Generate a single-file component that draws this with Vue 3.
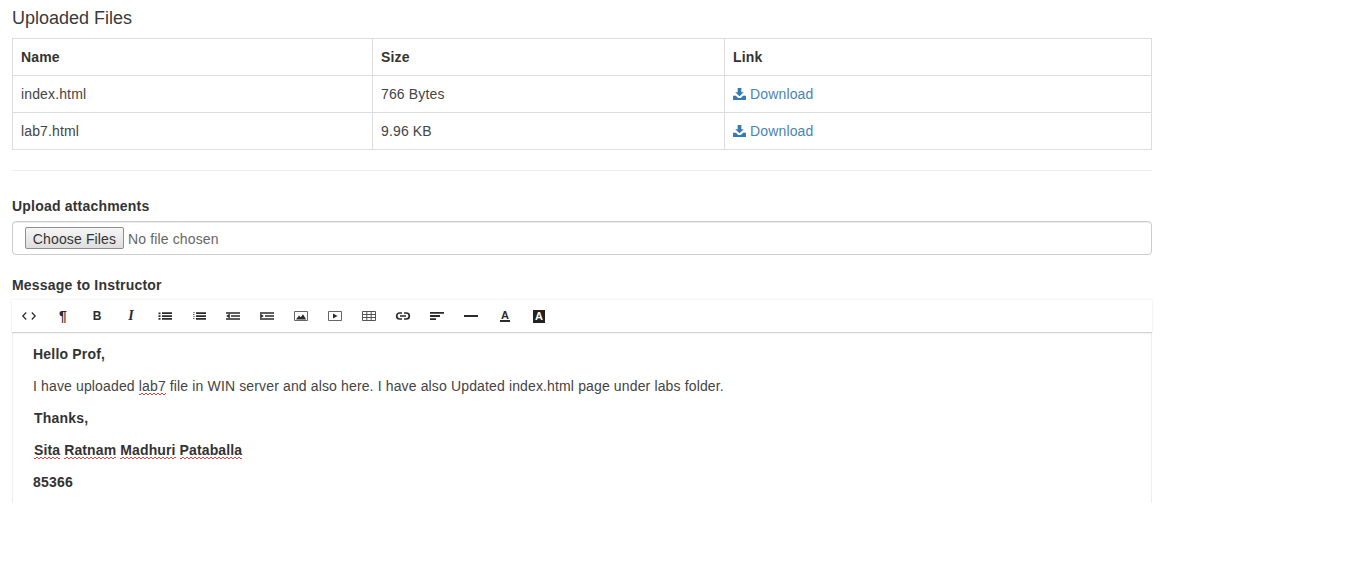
<script setup>
const files = [
  { name: "index.html", size: "766 Bytes" },
  { name: "lab7.html", size: "9.96 KB" },
];

const tools = [
  { id: "code", stroke: "M5.2 4.5L1.8 8L5.2 11.5M10.8 4.5L14.2 8L10.8 11.5", sw: 1.2 },
  { id: "para", text: "¶" },
  { id: "bold", text: "B" },
  { id: "italic", text: "I" },
  { id: "ul", fill: "M1.5 4.5h2v1.8h-2zM1.5 7.2h2V9h-2zM1.5 10h2v1.8h-2zM5 4.3h10V6H5zM5 7.2h10V9H5zM5 10h10v1.8H5z" },
  { id: "ol", fill: "M2.5 4h1v1h-1zM2 6h1.5v.8H2zM2.5 8h1v1h-1zM2 10.2h1.5v.8H2zM5 4.3h10V6H5zM5 7.2h10V9H5zM5 10h10v1.8H5z" },
  { id: "outdent", fill: "M1 4.2h14v1.5H1zM6 7.2h9v1.6H6zM1 10.3h14v1.5H1zM4.8 5.6v4.8L1.2 8z" },
  { id: "indent", fill: "M1 4.2h14v1.5H1zM6 7.2h9v1.6H6zM1 10.3h14v1.5H1zM1.2 5.6v4.8L4.8 8z" },
  { id: "picture", stroke: "M1.5 3.5h13v9h-13z", sw: 1, tone: "#666", fill: "M3 11.5l3-4 1.8 1.8 2.2-3 3.2 5.2z" },
  { id: "video", stroke: "M1.5 3.5h13v9h-13z", sw: 1, tone: "#666", fill: "M6 5.5l4.5 2.5L6 10.5z" },
  { id: "table", stroke: "M1.5 3.5h13v9h-13zM1.5 6.5h13M1.5 9.5h13M5.8 3.5v9M10.2 3.5v9", sw: 1, tone: "#555" },
  { id: "link", stroke: "M7 5H4.7a3 3 0 0 0 0 6H7M9 5h2.3a3 3 0 0 1 0 6H9M5 8h6", sw: 1.7 },
  { id: "align", fill: "M1 4h14v1.8H1zM1 7.1h10v1.8H1zM1 10.2h6v1.8H1z" },
  { id: "rule", fill: "M1 7h14v2H1z" },
  { id: "color", text: "A" },
  { id: "back", text: "A" },
];
</script>

<template>
  <div class="page">
    <h4 class="title">Uploaded Files</h4>
    <table class="files">
      <thead>
        <tr>
          <th class="col-name">Name</th>
          <th class="col-size">Size</th>
          <th>Link</th>
        </tr>
      </thead>
      <tbody>
        <tr v-for="file in files" :key="file.name">
          <td>{{ file.name }}</td>
          <td>{{ file.size }}</td>
          <td>
            <a class="dl" href="#">
              <svg width="13" height="12" viewBox="0 0 14 13">
                <path fill="#337ab7" d="M5 0h4v4.5h2.6L7 9 2.4 4.5H5zM0 8.5h3.2L5.5 10.7h3L10.8 8.5H14V13H0z" />
              </svg>
              Download
            </a>
          </td>
        </tr>
      </tbody>
    </table>

    <hr class="sep" />

    <div class="group">
      <label class="lbl">Upload attachments</label>
      <div class="file-input">
        <button class="choose" type="button">Choose Files</button>
        <span class="none">No file chosen</span>
      </div>
    </div>

    <div class="group">
      <label class="lbl">Message to Instructor</label>
      <div class="toolbar">
        <span v-for="t in tools" :key="t.id" class="tool">
          <span v-if="t.text" :class="['glyph', t.id]">{{ t.text }}</span>
          <svg v-else width="16" height="16" viewBox="0 0 16 16">
            <path v-if="t.stroke" :d="t.stroke" fill="none" :stroke="t.tone || '#2b2b2b'" :stroke-width="t.sw" />
            <path v-if="t.fill" :d="t.fill" fill="#2b2b2b" />
          </svg>
        </span>
      </div>
      <div class="editor">
        <p class="strong">Hello Prof,</p>
        <p>I have uploaded <span class="typo">lab7</span> file in WIN server and also here. I have also Updated index.html page under labs folder.</p>
        <p class="strong nudge">Thanks,</p>
        <p class="strong nudge names"><span class="typo">Sita</span> <span class="typo">Ratnam</span> <span class="typo">Madhuri</span> <span class="typo">Pataballa</span></p>
        <p class="strong">85366</p>
      </div>
    </div>
  </div>
</template>

<style>
body {
  background: #fff;
}
</style>

<style scoped>
.page {
  width: 1140px;
  margin-left: 12px;
  padding-top: 8px;
  font-family: "Liberation Sans", Arial, sans-serif;
  font-size: 14px;
  line-height: 20px;
  letter-spacing: 0.14px;
  color: #444;
}

.title {
  margin: 0 0 10px;
  color: #3a3a3a;
  font-size: 18px;
  font-weight: 400;
  line-height: 20px;
  letter-spacing: 0;
}

.files {
  width: 1140px;
  border-collapse: collapse;
  table-layout: fixed;
}

.files th,
.files td {
  box-sizing: border-box;
  padding: 8px;
  border: 1px solid #ddd;
  text-align: left;
}

.files th {
  color: #333;
  font-weight: 700;
}

.col-name {
  width: 360px;
}

.col-size {
  width: 352px;
}

.dl {
  color: #4a83b8;
  text-decoration: none;
}

.dl svg {
  vertical-align: -1px;
}

.sep {
  margin: 20px 0 25px;
  border: 0;
  border-top: 1px solid #eee;
}

.group {
  margin-bottom: 20px;
}

.lbl {
  display: block;
  margin-bottom: 5px;
  color: #333;
  font-weight: 700;
  letter-spacing: 0.2px;
}

.file-input {
  display: flex;
  align-items: center;
  box-sizing: border-box;
  height: 34px;
  padding: 0 12px;
  border: 1px solid #ccc;
  border-radius: 4px;
  box-shadow: inset 0 1px 1px rgba(0, 0, 0, 0.075);
}

.choose {
  box-sizing: border-box;
  width: 99px;
  height: 22px;
  padding: 1px 0 0;
  border: 1px solid #8f8f8f;
  border-radius: 2px;
  background: linear-gradient(#f6f6f6, #dedede);
  color: #333;
  font: 14px "Liberation Sans", Arial, sans-serif;
  letter-spacing: 0.14px;
}

.none {
  margin: 2px 0 0 4px;
  color: #666;
}

.toolbar {
  position: relative;
  display: flex;
  box-sizing: border-box;
  height: 33px;
  border-bottom: 1px solid #d4d4d4;
  box-shadow: 0 0 2px rgba(0, 0, 0, 0.12);
  background: #fff;
}

.tool {
  display: flex;
  flex: 0 0 34px;
  align-items: center;
  justify-content: center;
}

.glyph {
  color: #2b2b2b;
  font-weight: 700;
  line-height: 14px;
  letter-spacing: 0;
}

.para {
  font-size: 14px;
}

.bold {
  font-size: 12px;
}

.italic {
  font-family: "Liberation Serif", serif;
  font-size: 14px;
  font-style: italic;
}

.color {
  padding: 0 1px;
  border-bottom: 2px solid #2b2b2b;
  font-size: 11px;
  line-height: 10px;
}

.back {
  width: 12px;
  background: #222;
  color: #fff;
  font-size: 11px;
  line-height: 13px;
  text-align: center;
}

.editor {
  box-sizing: border-box;
  height: 170px;
  padding: 11px 20px 0;
  overflow: hidden;
  border: 1px solid #eee;
  border-width: 0 1px;
}

.editor p {
  margin: 0 0 12px;
}

.strong {
  color: #333;
  font-weight: 700;
  letter-spacing: 0.2px;
}

.nudge {
  padding-left: 1px;
}

.names {
  letter-spacing: 0.12px;
}

/* fine zigzag like the browser's spell check mark */
.typo {
  padding-bottom: 1px;
  background:
    linear-gradient(90deg, #d44 50%, transparent 50%) 0 100% / 4px 1px repeat-x,
    linear-gradient(90deg, transparent 50%, #d44 50%) 0 calc(100% - 1px) / 4px 1px repeat-x;
}
</style>
